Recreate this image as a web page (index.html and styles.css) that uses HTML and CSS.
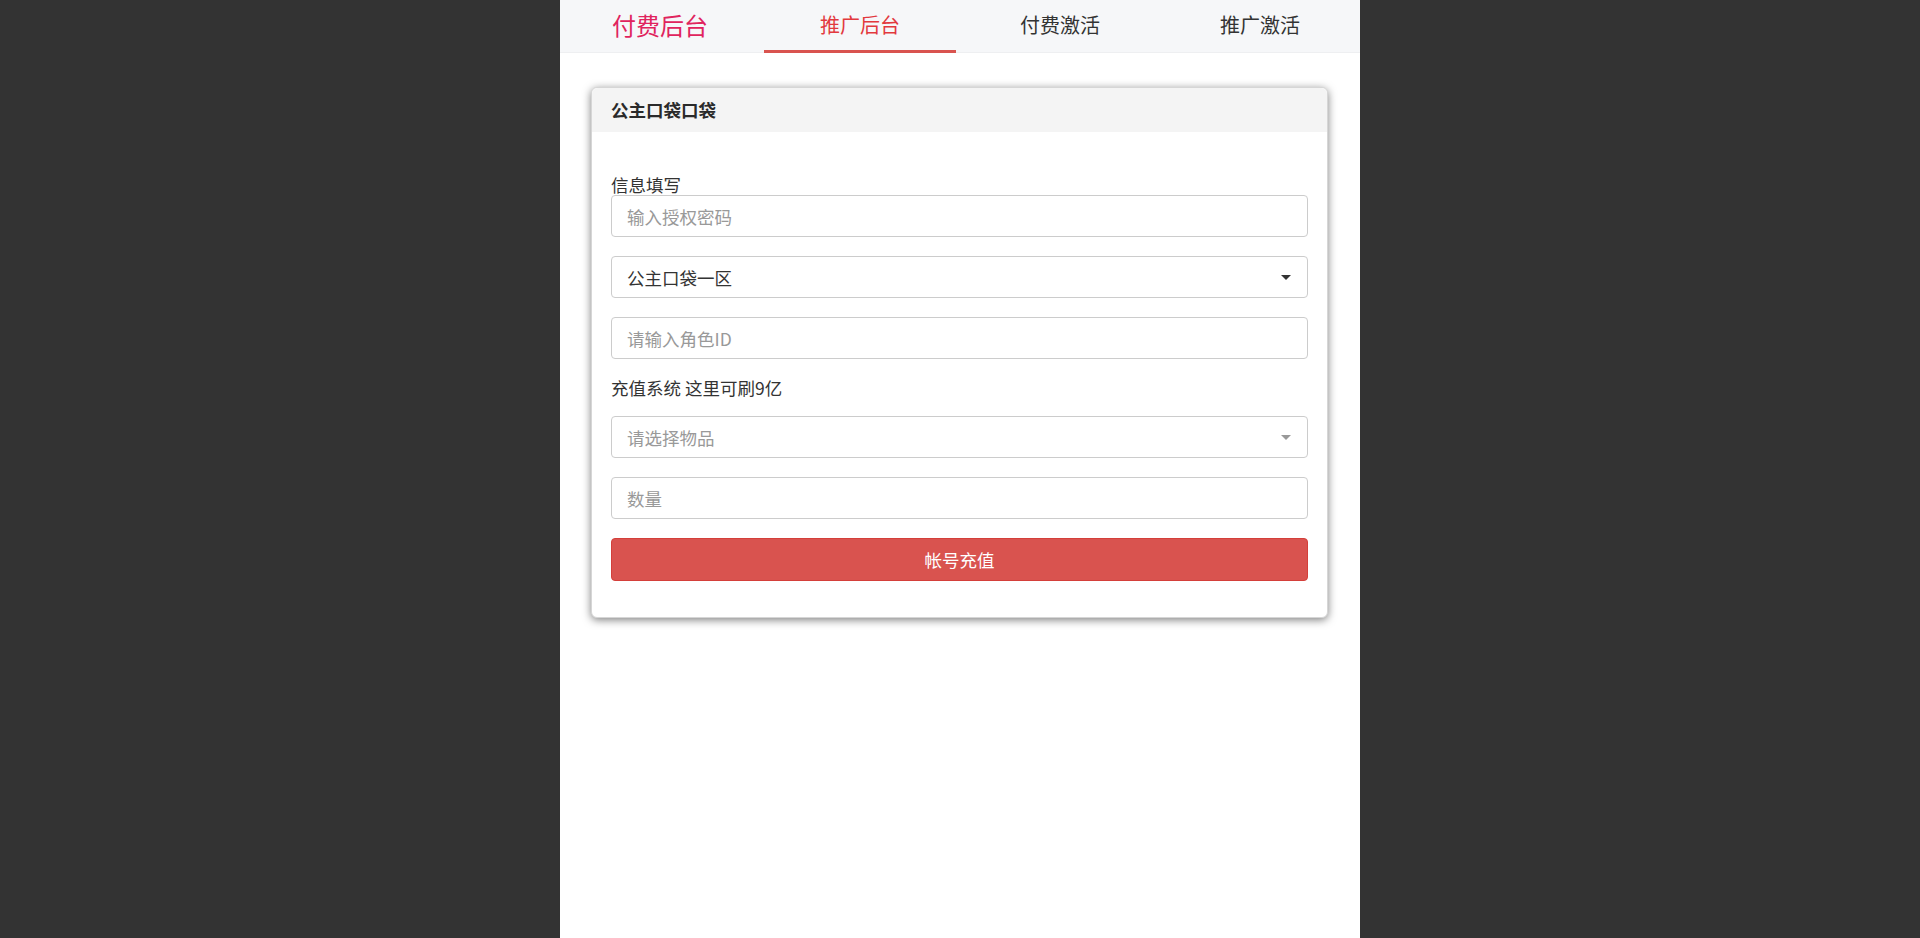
FILE: index.html
```html
<!DOCTYPE html>
<html lang="zh-CN">

<head>
    <meta charset="UTF-8">
    <meta name="viewport" content="width=device-width, initial-scale=1.0">
    <title>推广后台</title>
    <link rel="stylesheet" href="styles.css">
</head>

<body>
    <div class="page">
        <div class="nav">
            <a class="nav-item brand">付费后台</a>
            <a class="nav-item active">推广后台</a>
            <a class="nav-item">付费激活</a>
            <a class="nav-item">推广激活</a>
        </div>

        <div class="card">
            <div class="card-header">公主口袋口袋</div>
            <div class="card-body">
                <div class="label label-tight">信息填写</div>
                <input class="control" type="password" placeholder="输入授权密码">

                <div class="control select">
                    <span>公主口袋一区</span>
                    <b class="caret"></b>
                </div>

                <input class="control" type="text" placeholder="请输入角色ID">

                <div class="label">充值系统 这里可刷9亿</div>

                <div class="control select empty">
                    <span>请选择物品</span>
                    <b class="caret"></b>
                </div>

                <input class="control" type="text" placeholder="数量">

                <button class="btn-danger" type="button">帐号充值</button>
            </div>
        </div>
    </div>
</body>

</html>
```

FILE: styles.css
```css
* {
    margin: 0;
    padding: 0;
    box-sizing: border-box;
}

body {
    font-family: "Noto Sans CJK SC", "Noto Sans", sans-serif;
    background: #333333;
    color: #333;
}

.page {
    width: 800px;
    min-height: 100vh;
    margin: 0 auto;
    background: #fff;
    overflow: hidden;
}

/* 顶部导航 */
.nav {
    display: flex;
    height: 53px;
    background: #f6f7f9;
    border-bottom: 1px solid #eeeff1;
}

.nav-item {
    flex: 1;
    margin: 0 4px;
    height: 53px;
    line-height: 50px;
    text-align: center;
    font-size: 20px;
    color: #333;
    text-decoration: none;
    border-bottom: 3px solid transparent;
}

.nav-item.brand {
    font-size: 24px;
    color: #e0245e;
}

.nav-item.active {
    color: #e2393e;
    border-bottom-color: #d9534f;
}

/* 卡片 */
.card {
    margin: 34px 32px 0 31px;
    border: 1px solid #d6d6d6;
    border-radius: 6px;
    box-shadow: 0 2px 8px rgba(0, 0, 0, 0.5);
    background: #fff;
}

.card-header {
    height: 44px;
    line-height: 44px;
    padding: 0 19px;
    background: #f4f4f4;
    border-radius: 6px 6px 0 0;
    font-size: 17.5px;
    font-weight: bold;
    color: #2a2a2a;
}

.card-body {
    padding: 43px 19px 36px;
}

.label {
    font-size: 17.5px;
    line-height: 20px;
    margin-bottom: 18px;
    color: #333;
}

.label.label-tight {
    margin-bottom: 0;
}

.control {
    display: block;
    width: 100%;
    height: 42px;
    margin-bottom: 19px;
    padding: 0 15px;
    border: 1px solid #cccccc;
    border-radius: 4px;
    font-family: inherit;
    font-size: 17.5px;
    color: #333;
    background: #fff;
    outline: none;
}

.control::placeholder {
    color: #999;
}

.select {
    display: flex;
    align-items: center;
    justify-content: space-between;
    padding-right: 16px;
}

.select.empty {
    color: #999;
}

.caret {
    width: 0;
    height: 0;
    border-style: solid;
    border-width: 5px 5px 0 5px;
    border-color: #333 transparent transparent transparent;
}

.select.empty .caret {
    border-top-color: #999;
}

.btn-danger {
    display: block;
    width: 100%;
    height: 43px;
    border: 1px solid #d43f3a;
    border-radius: 4px;
    background: #d9534f;
    color: #fff;
    font-family: inherit;
    font-size: 17.5px;
    cursor: pointer;
}
```
